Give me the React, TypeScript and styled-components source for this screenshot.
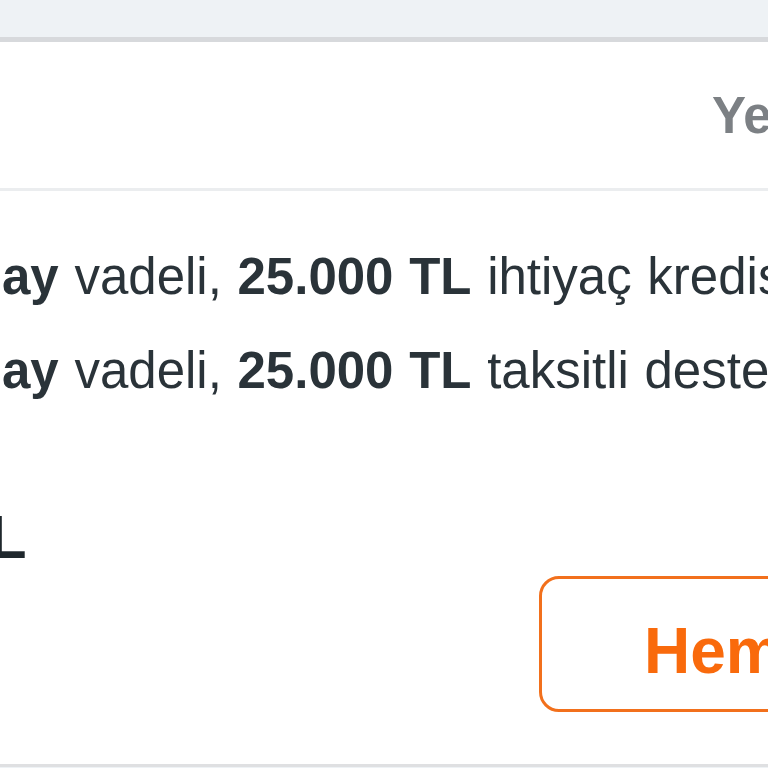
import React from "react";
import styled, { createGlobalStyle } from "styled-components";

const Global = createGlobalStyle`
  html, body {
    margin: 0;
    padding: 0;
    background: #eef2f5;
    overflow: hidden;
  }
  body {
    font-family: "Liberation Sans", Arial, Helvetica, sans-serif;
    width: 768px;
    height: 768px;
  }
`;

const Page = styled.div`
  padding-top: 37px;
  width: 768px;
  height: 768px;
  box-sizing: border-box;
  overflow: hidden;
`;

const Card = styled.section`
  background: #ffffff;
  border-top: 5px solid #d7d9dc;
  border-bottom: 3px solid #dfe0e2;
  display: flex;
  flex-direction: column;
`;

const Header = styled.header`
  height: 146px;
  display: flex;
  align-items: center;
  padding-left: 712px;
  border-bottom: 3px solid #ebedef;
  white-space: nowrap;
`;

const HeaderLabel = styled.span`
  font-size: 51px;
  line-height: 51px;
  font-weight: 700;
  color: #7c8084;
`;

const Body = styled.div`
  padding: 39px 0 52px 2px;
  display: flex;
  flex-direction: column;
  white-space: nowrap;
`;

const Line = styled.p`
  margin: 0;
  font-size: 51px;
  line-height: 94px;
  word-spacing: 1.5px;
  color: #2a3339;
  b {
    font-weight: 700;
  }
`;

const Amount = styled.div`
  margin: 88px 0 0 -51px;
  font-size: 62px;
  line-height: 62px;
  font-weight: 700;
  color: #1f272c;
`;

const ButtonRow = styled.div`
  display: flex;
  padding-left: 537px;
  margin-top: 8px;
`;

const CtaButton = styled.button`
  flex-shrink: 0;
  width: 420px;
  box-sizing: border-box;
  padding: 40px 0 26px 102px;
  border: 3px solid #f2701c;
  border-radius: 20px;
  background: #ffffff;
  text-align: left;
  font-family: "Liberation Sans", Arial, Helvetica, sans-serif;
  font-size: 64px;
  line-height: 64px;
  font-weight: 700;
  color: #f96a0c;
  white-space: nowrap;
`;

export default function App() {
  return (
    <>
      <Global />
      <Page>
        <Card>
          <Header>
            <HeaderLabel>Yeni</HeaderLabel>
          </Header>
          <Body>
            <Line>
              <b>ay</b> vadeli, <b>25.000 TL</b> ihtiyaç kredisi
            </Line>
            <Line>
              <b>ay</b> vadeli, <b>25.000 TL</b> taksitli destek
            </Line>
            <Amount>TL</Amount>
            <ButtonRow>
              <CtaButton>Hemen</CtaButton>
            </ButtonRow>
          </Body>
        </Card>
      </Page>
    </>
  );
}
